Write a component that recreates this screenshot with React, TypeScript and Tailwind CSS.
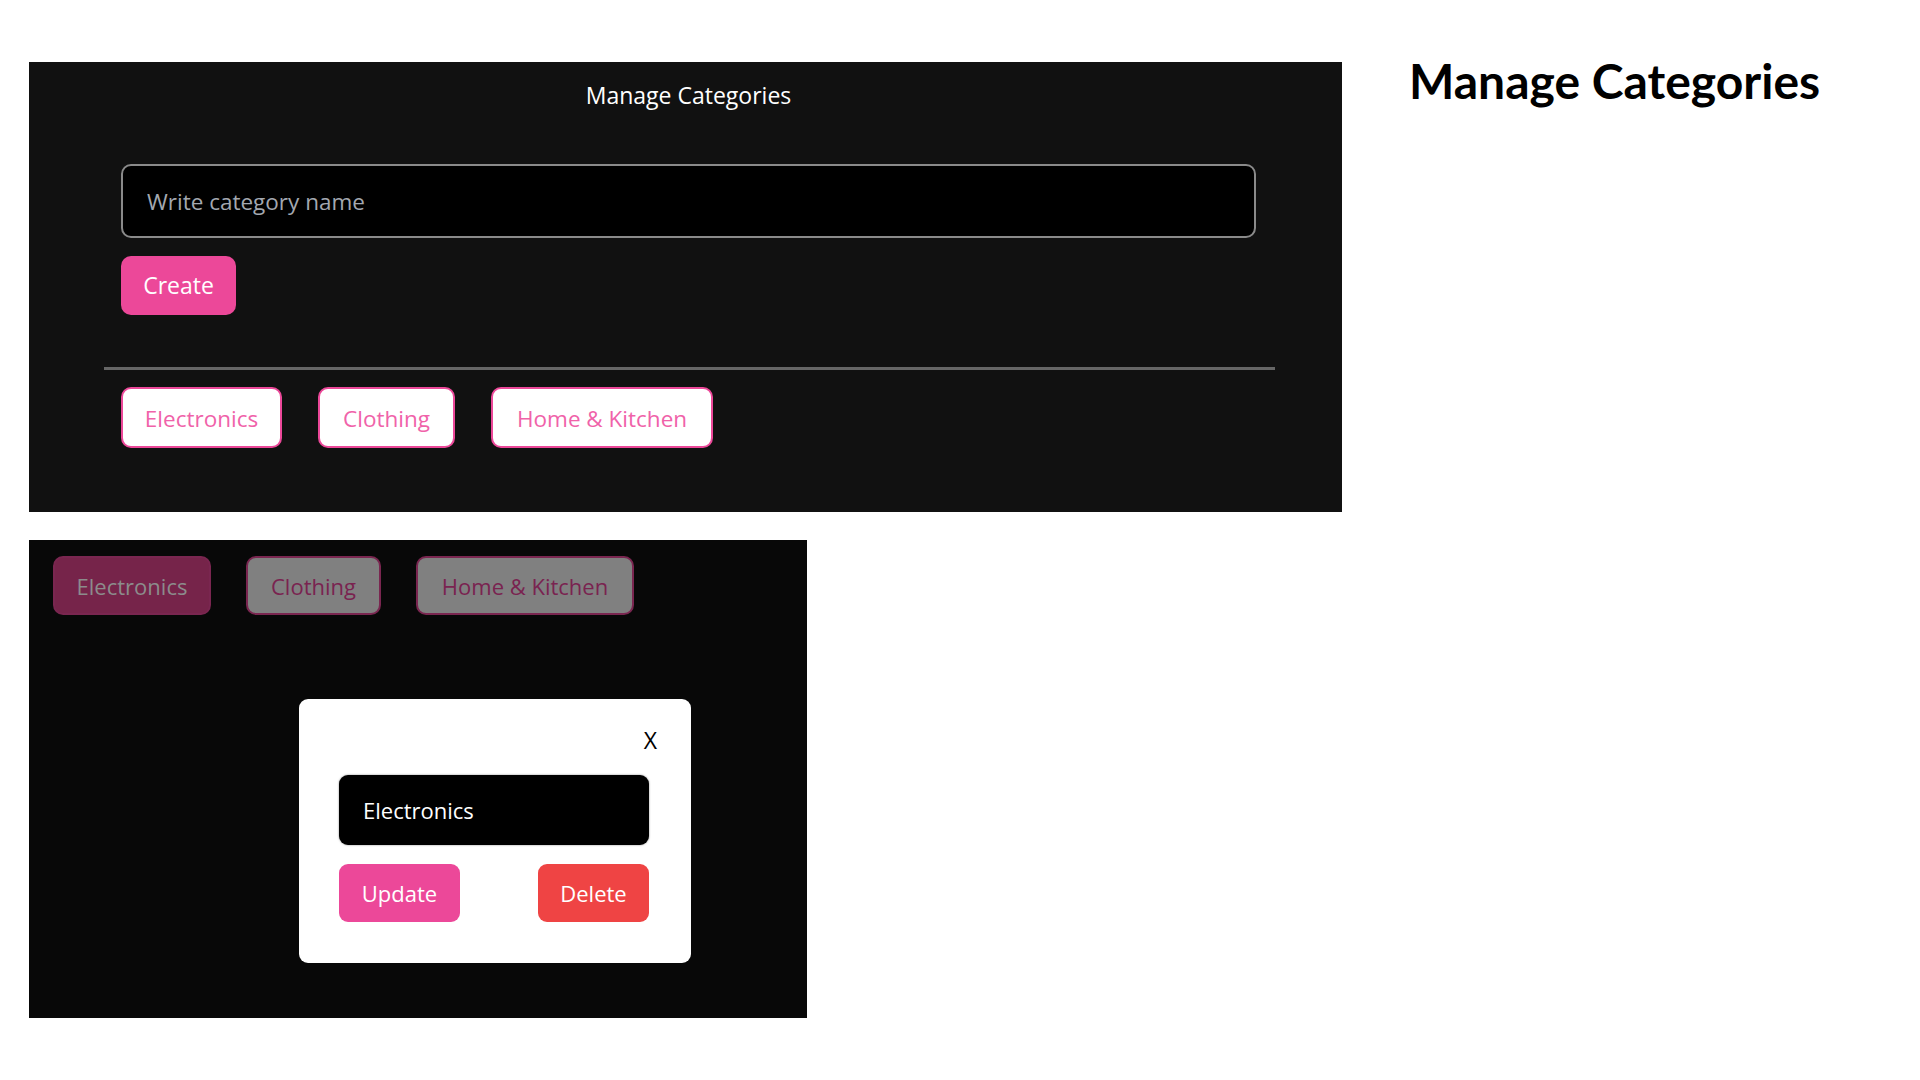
import React from 'react';

const categories = ["Electronics", "Clothing", "Home & Kitchen"];
const topWidths = ["w-[161px]", "w-[137px]", "w-[222px]"];
const bottomWidths = ["w-[158px]", "w-[135px]", "w-[218px]"];

function TopPanel() {
  return (
    <div className="w-[1313px] h-[450px] bg-[#111111] flex flex-col font-['Open_Sans',sans-serif]">
      <h2 className="text-center text-white text-[23px] leading-[30px] mt-[18px] pl-[6px]">Manage Categories</h2>
      <div className="pl-[92px] mt-[54px]">
        <input
          className="w-[1135px] h-[74px] bg-black border-2 border-[#8a8a8a] rounded-[10px] px-[24px] text-[22.5px] text-white placeholder:text-[#a3a8b0] outline-none"
          placeholder="Write category name"
        />
        <button className="mt-[18px] h-[59px] w-[115px] bg-[#ec4899] rounded-[10px] text-white text-[23px]">Create</button>
      </div>
      <div className="ml-[75px] mt-[52px] w-[1171px] h-[3px] bg-[#666666]" />
      <div className="flex gap-[36px] pl-[92px] mt-[17px]">
        {categories.map((c, i) => (
          <button
            key={c}
            className={`${topWidths[i]} h-[61px] pt-[3px] bg-white border-2 border-[#ec4899] rounded-[10px] text-[#f062a9] text-[22.5px]`}
          >
            {c}
          </button>
        ))}
      </div>
    </div>
  );
}

function BottomPanel() {
  return (
    <div className="w-[778px] h-[478px] bg-[#080808] flex flex-col font-['Open_Sans',sans-serif]">
      <div className="flex gap-[35px] pl-[24px] pt-[16px]">
        {categories.map((c, i) => (
          <div
            key={c}
            className={`${bottomWidths[i]} h-[59px] pt-[2px] rounded-[10px] border-2 flex items-center justify-center text-[22px] ${
              i === 0
                ? "bg-[#76244a] border-[#7a2650] text-[#8c8c8c]"
                : "bg-[#808080] border-[#7a2650] text-[#7a2350]"
            }`}
          >
            {c}
          </div>
        ))}
      </div>
      <div className="ml-[270px] mt-[84px] w-[392px] h-[264px] bg-white rounded-[9px] flex flex-col px-[40px]">
        <div className="flex justify-end pt-[26px] -mr-[6px]">
          <span className="text-black text-[23px] leading-[30px]">X</span>
        </div>
        <div className="mt-[20px] w-[310px] h-[70px] bg-black rounded-[9px] shadow-[0_0_2px_rgba(0,0,0,0.5)] flex items-center px-[24px] text-white text-[22px]">
          Electronics
        </div>
        <div className="flex justify-between mt-[19px] w-[310px]">
          <button className="w-[121px] h-[58px] bg-[#ec4899] rounded-[9px] text-white text-[22px]">Update</button>
          <button className="w-[111px] h-[58px] bg-[#ef4444] rounded-[9px] text-white text-[22px]">Delete</button>
        </div>
      </div>
    </div>
  );
}

export default function App() {
  return (
    <div className="w-[1920px] h-[1080px] bg-white flex pt-[62px] pl-[29px]">
      <div className="flex flex-col gap-[28px]">
        <TopPanel />
        <BottomPanel />
      </div>
      <div className="ml-[67px]">
        <h1 className="font-['Lato',sans-serif] font-bold text-[48px] leading-[48px] text-black -mt-[5px]">
          Manage Categories
        </h1>
      </div>
    </div>
  );
}
